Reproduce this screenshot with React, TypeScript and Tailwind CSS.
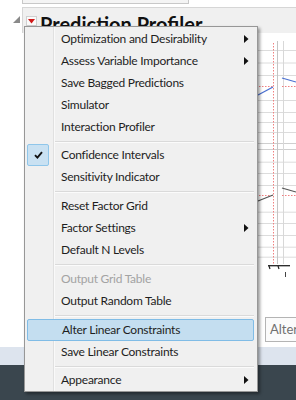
import type { ReactNode } from 'react'

type Item = { label: string; sub?: boolean; disabled?: boolean; checked?: boolean; active?: boolean }

const groups: { items: Item[]; sep?: string }[] = [
  {
    items: [
      { label: 'Optimization and Desirability', sub: true },
      { label: 'Assess Variable Importance', sub: true },
      { label: 'Save Bagged Predictions' },
      { label: 'Simulator' },
      { label: 'Interaction Profiler' },
    ],
    sep: 'h-[6px]',
  },
  {
    items: [{ label: 'Confidence Intervals', checked: true }, { label: 'Sensitivity Indicator' }],
    sep: 'h-[7px]',
  },
  {
    items: [{ label: 'Reset Factor Grid' }, { label: 'Factor Settings', sub: true }, { label: 'Default N Levels' }],
    sep: 'h-[7px]',
  },
  {
    items: [{ label: 'Output Grid Table', disabled: true }, { label: 'Output Random Table' }],
    sep: 'h-[7px]',
  },
  {
    items: [{ label: 'Alter Linear Constraints', active: true }, { label: 'Save Linear Constraints' }],
    sep: 'h-[6px]',
  },
  { items: [{ label: 'Appearance', sub: true }] },
]

function MenuRow({ item }: { item: Item }) {
  return (
    <div
      className={`relative ml-[2px] mr-[3px] flex h-[22px] items-center pl-[34px] pr-[3px] text-[12px] tracking-[-0.25px] ${
        item.active ? 'rounded-[2px] border border-[#80bce6] bg-[#c4def0] pl-[33px]' : ''
      } ${item.disabled ? 'text-[#a3a3a3]' : 'text-[#1e1e1e]'}`}
    >
      {item.checked && (
        <span className="absolute left-0 top-0 flex h-[22px] w-[22px] items-center justify-center rounded-[2px] border border-[#8fc6ea] bg-[#c9e1f2]">
          <svg width="9" height="8" viewBox="0 0 9 8">
            <path d="M1 4.2 L3.4 6.6 L8 1.2" fill="none" stroke="#111" strokeWidth="1.9" />
          </svg>
        </span>
      )}
      <span className="flex-1">{item.label}</span>
      {item.sub && (
        <svg width="5" height="8" viewBox="0 0 5 8" className="mr-[2px]">
          <polygon points="0,0 4.5,4 0,8" fill="#111" />
        </svg>
      )}
    </div>
  )
}

function ContextMenu() {
  return (
    <div className="absolute left-[24px] top-[26px] w-[234px] border border-[#979797] bg-[#f0f0f0] pt-[1px] shadow-[2px_2px_3px_rgba(0,0,0,0.4)]">
      <div className="absolute bottom-0 left-[28px] top-0 w-[2px] border-l border-[#e0e0e0] bg-white/60" />
      {groups.map((g, i) => (
        <div key={i} className="relative">
          {g.items.map((it) => (
            <MenuRow key={it.label} item={it} />
          ))}
          {g.sep && (
            <div className={`${g.sep} pl-[30px] pr-[3px] pt-[3px]`}>
              <div className="h-[2px] border-t border-[#dadada] bg-white/70" />
            </div>
          )}
        </div>
      ))}
    </div>
  )
}

function Plot() {
  const upper = [17, 29.5, 42, 67, 79, 89, 99]
  const lower = [128.7, 140, 152, 178.7, 190, 202, 213.7, 223.7]
  const h = (y: number, k: string): ReactNode => (
    <line key={k} x1="0" x2="60" y1={y} y2={y} stroke="#dcdcdc" strokeWidth="1" />
  )
  return (
    <svg width="60" height="250" viewBox="0 0 60 250" className="block">
      {upper.map((y) => h(y + 0.5, 'u' + y))}
      {lower.map((y) => h(y + 0.5, 'l' + y))}
      <line x1="0" x2="60" y1="110.5" y2="110.5" stroke="#cfcfcf" />
      <line x1="0" x2="60" y1="116.5" y2="116.5" stroke="#cfcfcf" />
      <line x1="41.5" x2="41.5" y1="8" y2="231" stroke="#c4c4c4" />
      <line x1="47.5" x2="47.5" y1="8" y2="231" stroke="#d8d8d8" />
      <line x1="37.5" x2="37.5" y1="10" y2="231" stroke="#f08080" strokeDasharray="1.5 1.5" />
      <line x1="20" x2="37" y1="53.5" y2="53.5" stroke="#f08080" strokeDasharray="1.5 1.5" />
      <line x1="46" x2="60" y1="53.5" y2="53.5" stroke="#f08080" strokeDasharray="1.5 1.5" />
      <line x1="20" x2="37" y1="162.5" y2="162.5" stroke="#f08080" strokeDasharray="1.5 1.5" />
      <line x1="46" x2="60" y1="162.5" y2="162.5" stroke="#f08080" strokeDasharray="1.5 1.5" />
      <line x1="22" y1="62" x2="37" y2="54" stroke="#4a6fd0" strokeWidth="1.2" />
      <line x1="46" y1="45" x2="60" y2="49" stroke="#4a6fd0" strokeWidth="1.2" />
      <line x1="22" y1="168" x2="37" y2="162" stroke="#555" strokeWidth="1.2" />
      <line x1="46" y1="155" x2="60" y2="159" stroke="#555" strokeWidth="1.2" />
      <line x1="32" x2="54" y1="232.7" y2="232.7" stroke="#222" strokeWidth="1.3" />
      <path d="M33 233 L34 236 M42 233 L43 236" stroke="#222" strokeWidth="1.2" />
      <line x1="49.5" x2="49.5" y1="239" y2="244" stroke="#444" strokeWidth="1" />
    </svg>
  )
}

export default function App() {
  return (
    <div className="relative h-[400px] w-[296px] overflow-hidden bg-white font-['Lato',sans-serif]">
      <div className="h-[7px] pl-[22px]">
        <div className="h-[4px] w-[167px] border-x border-b border-[#c8c8c8] bg-[#f4f4f4]" />
      </div>

      <div className="flex h-[26px]">
        <div className="flex w-[22px] items-start pl-[12px] pt-[9px]">
          <svg width="8" height="8" viewBox="0 0 8 8">
            <polygon points="8,0 8,7 1,7" fill="#8a8a8a" />
          </svg>
        </div>
        <div className="flex flex-1 items-start border-l border-t border-[#d6d6d6] bg-[#f0f0f0] pl-[3px] pt-[7px]">
          <div className="mr-[3px] mt-[1px] flex h-[10px] w-[11px] items-center justify-center border border-[#d0d0d0] bg-[#fafafa]">
            <svg width="7" height="5" viewBox="0 0 7 5">
              <polygon points="0,0 7,0 3.5,4.5" fill="#d01818" />
            </svg>
          </div>
          <span className="-mt-[2px] text-[20px] font-bold leading-[22px] text-[#111]">Prediction Profiler</span>
        </div>
      </div>

      <div className="flex h-[314px]">
        <div className="flex-1" />
        <div className="w-[60px]">
          <Plot />
          <div className="ml-[29px] mt-[34px] flex h-[25px] w-[40px] items-center border border-[#b4b4b4] bg-[#fbfbfb] pl-[4px] text-[13px] text-[#707070]">
            Alter
          </div>
        </div>
      </div>

      <div className="h-[18px] bg-[#dde4ee]" />
      <div className="h-[35px] bg-[#3a464e]" />

      <ContextMenu />
    </div>
  )
}
